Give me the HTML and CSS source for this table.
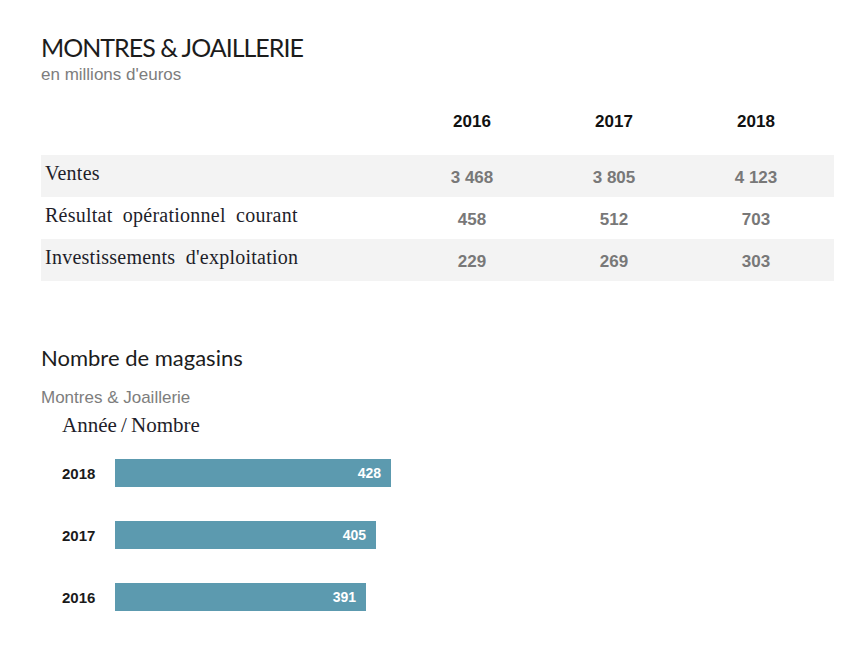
FILE: index.html
```html
<!DOCTYPE html>
<html lang="fr">
<head>
<meta charset="utf-8">
<link rel="stylesheet" href="styles.css">
</head>
<body>
<main class="page">
  <h1 class="title">MONTRES &amp; JOAILLERIE</h1>
  <p class="unit">en millions d'euros</p>

  <div class="table">
    <div class="row head">
      <div class="label"></div>
      <div class="year">2016</div>
      <div class="year">2017</div>
      <div class="year">2018</div>
    </div>
    <div class="row shaded">
      <div class="label">Ventes</div>
      <div class="num">3 468</div>
      <div class="num">3 805</div>
      <div class="num">4 123</div>
    </div>
    <div class="row">
      <div class="label">Résultat opérationnel courant</div>
      <div class="num">458</div>
      <div class="num">512</div>
      <div class="num">703</div>
    </div>
    <div class="row shaded">
      <div class="label">Investissements d'exploitation</div>
      <div class="num">229</div>
      <div class="num">269</div>
      <div class="num">303</div>
    </div>
  </div>

  <h2 class="subtitle">Nombre de magasins</h2>
  <p class="unit section">Montres &amp; Joaillerie</p>
  <p class="axis">Année&#8201;/&#8201;Nombre</p>

  <div class="chart">
    <div class="bar-row">
      <span class="bar-year">2018</span>
      <div class="bar" style="width:276px"><span>428</span></div>
    </div>
    <div class="bar-row">
      <span class="bar-year">2017</span>
      <div class="bar" style="width:261px"><span>405</span></div>
    </div>
    <div class="bar-row">
      <span class="bar-year">2016</span>
      <div class="bar" style="width:251px"><span>391</span></div>
    </div>
  </div>
</main>
</body>
</html>
```
FILE: styles.css
```css
* { box-sizing: border-box; }
html, body { margin: 0; padding: 0; background: #fff; }
body { font-family: "Liberation Sans", Arial, sans-serif; }

.page {
  width: 860px;
  padding: 31px 26px 0 41px;
}

.title {
  margin: 0;
  font-family: "Lato", "Liberation Sans", sans-serif;
  font-weight: 400;
  font-size: 25px;
  line-height: 32px;
  color: #1c1c1c;
  letter-spacing: -1px;
}

.unit {
  margin: 2px 0 0;
  font-size: 17px;
  line-height: 20px;
  color: #7d7d7d;
}

.table {
  margin-top: 20px;
  width: 793px;
}

.row {
  display: grid;
  grid-template-columns: 360px 142px 142px 142px;
  align-items: center;
  height: 42px;
}

.row.head {
  height: 50px;
  align-items: start;
}

.row.shaded { background: #f3f3f3; }

.label {
  padding-left: 4px;
  padding-bottom: 5px;
  font-family: "Liberation Serif", "Times New Roman", serif;
  font-size: 20px;
  line-height: 23px;
  color: #1e1e2a;
  letter-spacing: 0.25px;
  word-spacing: 5px;
}

.year {
  text-align: center;
  font-weight: 700;
  font-size: 17px;
  line-height: 20px;
  color: #111;
  padding-top: 7px;
}

.num {
  text-align: center;
  font-weight: 700;
  font-size: 17px;
  line-height: 20px;
  color: #787878;
  padding-top: 3px;
}

.subtitle {
  margin: 64px 0 0;
  font-family: "Lato", "Liberation Sans", sans-serif;
  font-weight: 400;
  font-size: 22px;
  line-height: 26px;
  color: #1c1c1c;
}

.unit.section { margin-top: 17px; }

.axis {
  margin: 6px 0 0 21px;
  font-family: "Liberation Serif", "Times New Roman", serif;
  font-size: 21px;
  line-height: 22px;
  color: #1e1e2a;
}

.chart {
  margin-top: 23px;
  display: flex;
  flex-direction: column;
  gap: 34px;
}

.bar-row {
  display: flex;
  align-items: center;
  height: 28px;
}

.bar-year {
  width: 74px;
  padding-left: 21px;
  font-weight: 700;
  font-size: 15px;
  color: #1a1a1a;
}

.bar {
  height: 28px;
  background: #5c9aaf;
  display: flex;
  align-items: center;
  justify-content: flex-end;
  padding-right: 10px;
}

.bar span {
  color: #fff;
  font-weight: 700;
  font-size: 14px;
}
```
